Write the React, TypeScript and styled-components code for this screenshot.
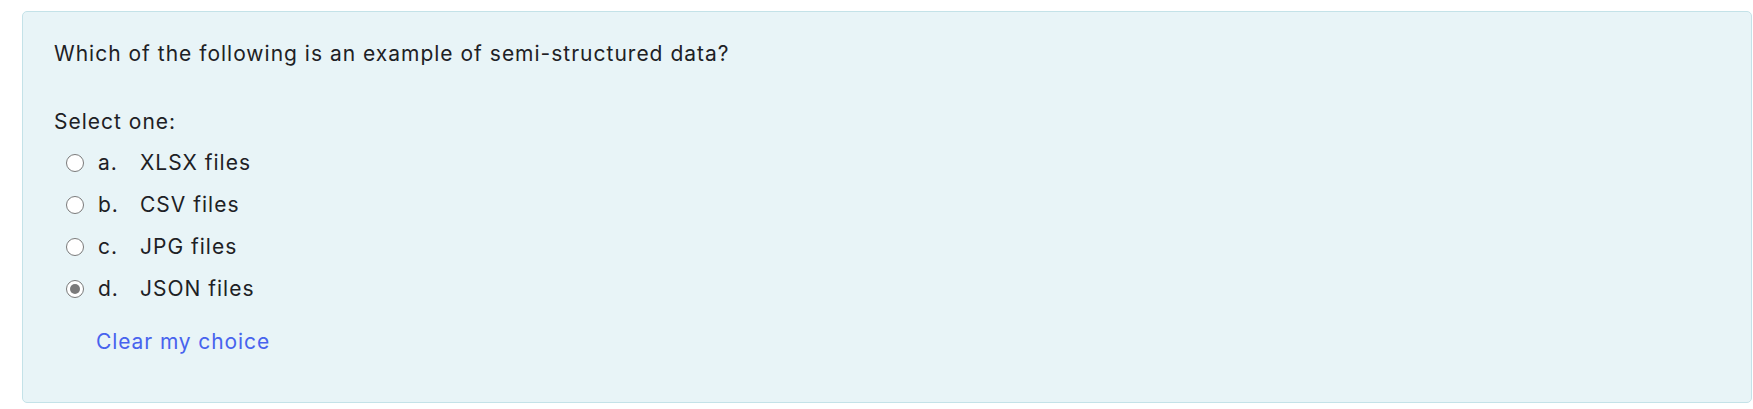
import styled, { createGlobalStyle } from "styled-components";

const GlobalStyle = createGlobalStyle`
  body {
    margin: 11px 1px 0 22px;
    background: #ffffff;
    font-family: Inter, "Noto Sans", sans-serif;
    color: #1d2125;
  }
`;

const Card = styled.div`
  background-color: #e8f4f7;
  border: 1px solid #c4e2e8;
  border-radius: 5px;
  padding: 27px 31px 45px 31px;
  height: 392px;
  box-sizing: border-box;
  font-size: 21px;
  line-height: 30px;
  letter-spacing: 1px;
`;

const Question = styled.div`
  margin: 0;
`;

const Prompt = styled.div`
  margin-top: 38px;
  margin-bottom: 5px;
`;

const Options = styled.div`
  display: flex;
  flex-direction: column;
  padding-left: 12px;
`;

const Option = styled.label`
  display: flex;
  align-items: center;
  height: 42px;
`;

const Radio = styled.input`
  appearance: none;
  margin: 0 14px 0 0;
  width: 18px;
  height: 18px;
  border-radius: 50%;
  border: 1px solid #7a7a7a;
  background: #ffffff;
  box-sizing: border-box;
  position: relative;
  &:checked::after {
    content: "";
    position: absolute;
    left: 3px;
    top: 3px;
    width: 10px;
    height: 10px;
    border-radius: 50%;
    background: #7a7a7a;
  }
`;

const Letter = styled.span`
  width: 42px;
`;

const ClearLink = styled.a`
  display: inline-block;
  margin-top: 17px;
  margin-left: 42px;
  color: #4763ee;
  text-decoration: none;
  letter-spacing: 0.9px;
`;

const options = [
  { letter: "a.", text: "XLSX files" },
  { letter: "b.", text: "CSV files" },
  { letter: "c.", text: "JPG files" },
  { letter: "d.", text: "JSON files" },
];

function App() {
  return (
    <>
      <GlobalStyle />
      <Card>
        <Question>Which of the following is an example of semi-structured data?</Question>
        <Prompt>Select one:</Prompt>
        <Options>
          {options.map((o, i) => (
            <Option key={o.letter}>
              <Radio type="radio" name="answer" defaultChecked={i === 3} />
              <Letter>{o.letter}</Letter>
              <span>{o.text}</span>
            </Option>
          ))}
        </Options>
        <ClearLink href="#">Clear my choice</ClearLink>
      </Card>
    </>
  );
}

export default App;
